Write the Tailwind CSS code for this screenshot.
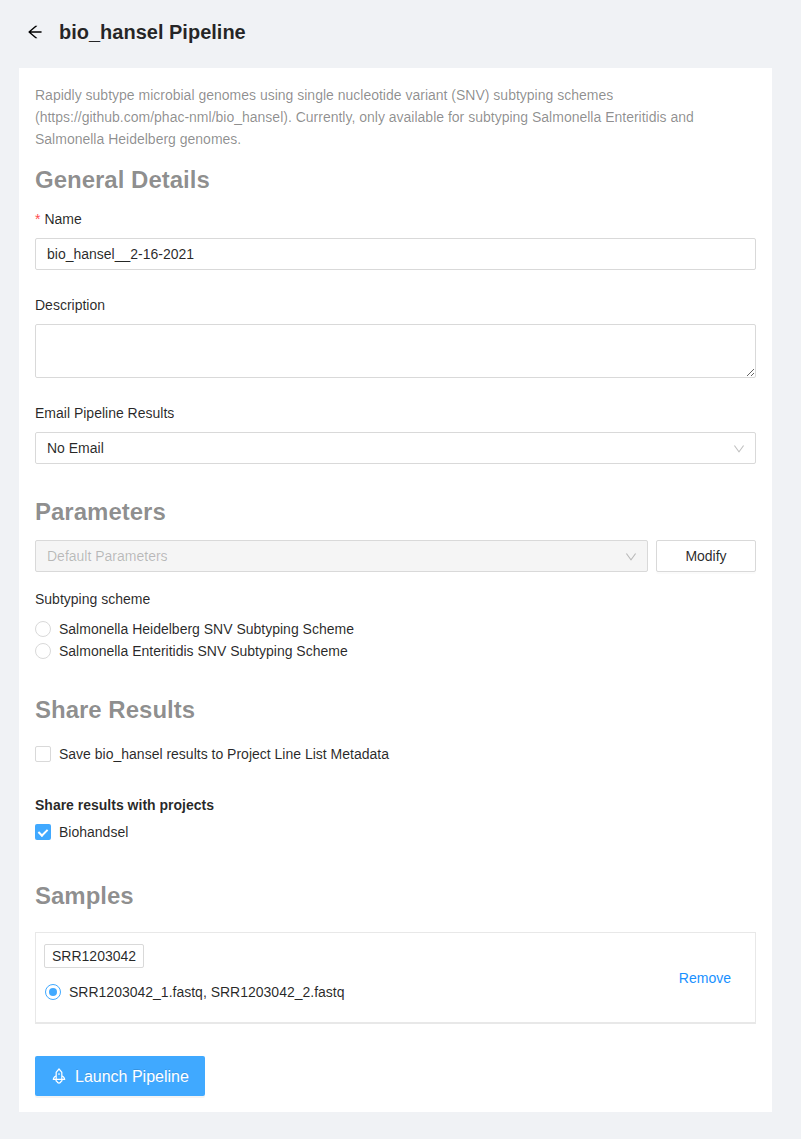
<!DOCTYPE html>
<html lang="en">
<head>
<meta charset="utf-8">
<title>bio_hansel Pipeline</title>
<script src="https://cdn.jsdelivr.net/npm/@tailwindcss/browser@4"></script>
</head>
<body class="min-h-[1139px] bg-[#f0f2f5] font-['Liberation_Sans',Arial,sans-serif] text-sm leading-[22px] text-black/85">
<header class="flex h-[68px] items-center gap-4 pb-1 pl-[27px]">
  <svg class="size-4 fill-black" viewBox="64 64 896 896"><path d="M872 474H286.9l350.2-304c5.6-4.9 2.2-14-5.2-14h-88.5c-3.9 0-7.6 1.4-10.5 3.9L155 487.8a31.96 31.96 0 000 48.3L535.1 866c1.5 1.3 3.3 2 5.2 2h91.5c7.4 0 10.8-9.2 5.2-14L286.9 550H872c4.4 0 8-3.6 8-8v-60c0-4.4-3.6-8-8-8z"/></svg>
  <h1 class="text-xl leading-8 font-bold">bio_hansel Pipeline</h1>
</header>
<main class="ml-[19px] h-[1044px] w-[753px] bg-white p-4">
  <p class="text-black/45">Rapidly subtype microbial genomes using single nucleotide variant (SNV) subtyping schemes<br>(https://github.com/phac-nml/bio_hansel). Currently, only available for subtyping Salmonella Enteritidis and<br>Salmonella Heidelberg genomes.</p>

  <h2 class="mt-3.5 text-2xl leading-8 font-bold text-black/45">General Details</h2>
  <label class="mt-3 flex gap-1" for="name"><span class="text-[#ff4d4f]">*</span>Name</label>
  <input id="name" class="mt-2 block h-8 w-full rounded-xs border border-[#d9d9d9] px-[11px]" value="bio_hansel__2-16-2021">
  <label class="mt-6 block" for="description">Description</label>
  <textarea id="description" class="mt-2 block h-[54px] w-full resize-y rounded-xs border border-[#d9d9d9] px-[11px] py-1"></textarea>
  <div class="mt-6">Email Pipeline Results</div>
  <div class="mt-2 flex h-8 items-center justify-between rounded-xs border border-[#d9d9d9] px-[11px]">
    <span>No Email</span>
    <svg class="mt-0.5 mr-[-1px] size-3 fill-black/25" viewBox="64 64 896 896"><path d="M884 256h-75c-5.1 0-9.9 2.5-12.9 6.6L512 654.2 227.9 262.6c-3-4.1-7.8-6.6-12.9-6.6h-75c-6.5 0-10.3 7.4-6.5 12.7l352.6 486.1c12.8 17.6 39 17.6 51.7 0l352.6-486.1c3.9-5.3.1-12.7-6.4-12.7z"/></svg>
  </div>

  <h2 class="mt-8 text-2xl leading-8 font-bold text-black/45">Parameters</h2>
  <div class="mt-3 flex gap-2">
    <div class="flex h-8 flex-1 items-center justify-between rounded-xs border border-[#d9d9d9] bg-[#f5f5f5] px-[11px] text-black/25">
      <span>Default Parameters</span>
      <svg class="mt-0.5 mr-[-1px] size-3 fill-black/25" viewBox="64 64 896 896"><path d="M884 256h-75c-5.1 0-9.9 2.5-12.9 6.6L512 654.2 227.9 262.6c-3-4.1-7.8-6.6-12.9-6.6h-75c-6.5 0-10.3 7.4-6.5 12.7l352.6 486.1c12.8 17.6 39 17.6 51.7 0l352.6-486.1c3.9-5.3.1-12.7-6.4-12.7z"/></svg>
    </div>
    <button class="h-8 w-[100px] rounded-xs border border-[#d9d9d9] bg-white shadow-[0_2px_0_rgba(0,0,0,0.016)]">Modify</button>
  </div>
  <div class="mt-4">Subtyping scheme</div>
  <div class="mt-2 flex items-center gap-2"><span class="size-4 rounded-full border border-[#d9d9d9]"></span>Salmonella Heidelberg SNV Subtyping Scheme</div>
  <div class="flex items-center gap-2"><span class="size-4 rounded-full border border-[#d9d9d9]"></span>Salmonella Enteritidis SNV Subtyping Scheme</div>

  <h2 class="mt-8 text-2xl leading-8 font-bold text-black/45">Share Results</h2>
  <div class="mt-[17px] flex items-center gap-2"><span class="size-4 rounded-xs border border-[#d9d9d9]"></span>Save bio_hansel results to Project Line List Metadata</div>
  <div class="mt-[29px] font-bold">Share results with projects</div>
  <div class="mt-[5px] flex items-center gap-2">
    <span class="flex size-4 justify-center rounded-xs bg-[#40a9ff] pt-[3px]"><span class="h-[9.14px] w-[5.71px] rotate-45 border-r-2 border-b-2 border-white"></span></span>Biohandsel
  </div>

  <h2 class="mt-[37px] text-2xl leading-8 font-bold text-black/45">Samples</h2>
  <div class="mt-5 flex h-[92px] items-center justify-between border border-b-2 border-[#e8e8e8] pr-6 pl-2">
    <div class="flex flex-col items-start gap-[13px] pb-2">
      <span class="h-6 rounded-xs border border-[#d9d9d9] px-[7px]">SRR1203042</span>
      <div class="flex items-center gap-2 pl-px"><span class="flex size-4 items-center justify-center rounded-full border border-[#40a9ff]"><span class="size-2 rounded-full bg-[#40a9ff]"></span></span>SRR1203042_1.fastq, SRR1203042_2.fastq</div>
    </div>
    <a class="text-[#1890ff]">Remove</a>
  </div>
  <button class="mt-8 flex h-10 w-[170px] items-center gap-2 rounded-xs bg-[#40a9ff] pl-4 text-base text-white shadow-[0_2px_0_rgba(0,0,0,0.045)] [text-shadow:0_-1px_0_rgba(0,0,0,0.12)]">
    <svg class="size-4 fill-white" viewBox="64 64 896 896"><path d="M864 736c0-111.6-65.4-208-160-252.9V317.3c0-15.1-5.3-29.7-15.1-41.2L536.5 95.4C530.1 87.8 521 84 512 84s-18.1 3.8-24.5 11.4L335.1 276.1a63.97 63.97 0 00-15.1 41.2v165.8C225.4 528 160 624.4 160 736h156.5c-2.3 7.2-3.5 15-3.5 23.8 0 22.1 7.6 43.7 21.4 60.8a97.2 97.2 0 0043.1 30.6c23.1 54 75.6 88.8 134.5 88.8 29.1 0 57.3-8.6 81.4-24.8 23.6-15.8 41.9-37.9 53-64a97 97 0 0043.1-30.5 97.52 97.52 0 0021.4-60.8c0-8.4-1.1-16.4-3.1-23.8H864zM762.3 621.4c9.4 14.6 17 30.3 22.5 46.6H700V558.7a211.6 211.6 0 0162.3 62.7zM388 483.1V318.8l124-147 124 147V668H388V483.1zM239.2 668c5.5-16.3 13.1-32 22.5-46.6 16.3-25.2 37.5-46.5 62.3-62.7V668h-84.8zm388.9 116.2c-5.2 3-11.2 4.2-17.1 3.4l-19.5-2.4-2.8 19.4c-5.4 37.9-38.4 66.5-76.7 66.5-38.3 0-71.3-28.6-76.7-66.5l-2.8-19.5-19.5 2.5a27.7 27.7 0 01-17.1-3.5c-8.7-5-14.1-14.3-14.1-24.4 0-10.6 5.9-19.4 14.6-23.8h231.3c8.8 4.5 14.6 13.3 14.6 23.8-.1 10.2-5.5 19.6-14.2 24.5zM464 400a48 48 0 1096 0 48 48 0 10-96 0z"/></svg>
    <span class="pt-0.5">Launch Pipeline</span>
  </button>
</main>
</body>
</html>
